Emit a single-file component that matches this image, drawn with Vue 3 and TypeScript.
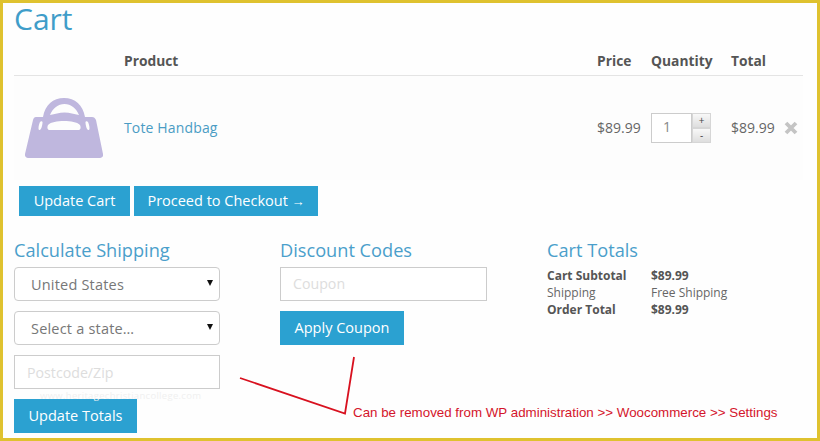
<script setup lang="ts">
interface Row { label: string; value: string; strong: boolean }
const totals: Row[] = [
  { label: 'Cart Subtotal', value: '$89.99', strong: true },
  { label: 'Shipping', value: 'Free Shipping', strong: false },
  { label: 'Order Total', value: '$89.99', strong: true },
]
</script>

<template>
  <div class="frame">
    <h1 class="title">Cart</h1>

    <div class="table">
      <div class="grid head">
        <span></span>
        <span>Product</span>
        <span>Price</span>
        <span>Quantity</span>
        <span>Total</span>
      </div>
      <div class="grid item">
        <svg class="bag" viewBox="25 96 78 60" width="78" height="60" aria-hidden="true">
          <path
            fill="#bfb7de"
            fill-rule="evenodd"
            d="M36 115 H43 C45 103 53 96 64 96 C75 96 83 103 85 115 H92 C94 115 95 116 96 118 L103 152 C103.600 154 102 156 100 156 H28 C26 156 24.500 154 25 152 L33 118 C33.500 116 34.500 115 36 115 Z
               M50 113 C53 106 58 102 64.500 102 C71 102 76 106 79 113 C74 112 70 110.500 64.500 110.500 C59 110.500 55 112 50 113 Z
               M50 128 H78 C81 128 81 125 80 123 C77 120 71 119 64 119 C57 119 51 120 48 123 C47 125 47 128 50 128 Z
               M39.500 128 C41 128 42 125 42.500 121 C42.800 119 41 118.500 40 120 C39 122 37.500 128 39.500 128 Z
               M88.500 128 C87 128 86 125 85.500 121 C85.200 119 87 118.500 88 120 C89 122 90.500 128 88.500 128 Z"
          />
        </svg>
        <a class="link cell">Tote Handbag</a>
        <span class="cell">$89.99</span>
        <div class="qty">
          <span class="qty-value">1</span>
          <div class="steppers">
            <span class="step">+</span>
            <span class="step">-</span>
          </div>
        </div>
        <div class="line-total">
          <span class="cell">$89.99</span>
          <svg class="remove" viewBox="0 0 14 14" width="14" height="14" aria-hidden="true">
            <path d="M2 2 L12 12 M12 2 L2 12" stroke="#c4c4c4" stroke-width="3.800" />
          </svg>
        </div>
      </div>
    </div>

    <div class="actions">
      <button class="btn cart-btn">Update Cart</button>
      <button class="btn checkout-btn">Proceed to Checkout <span class="btn-arrow">→</span></button>
    </div>

    <div class="columns">
      <section class="col">
        <h2>Calculate Shipping</h2>
        <div class="select">United States<i class="caret"></i></div>
        <div class="select">Select a state…<i class="caret"></i></div>
        <input class="field" placeholder="Postcode/Zip" />
        <button class="btn totals-btn">Update Totals</button>
      </section>
      <section class="col">
        <h2>Discount Codes</h2>
        <input class="field coupon" placeholder="Coupon" />
        <button class="btn coupon-btn">Apply Coupon</button>
      </section>
      <section class="col">
        <h2>Cart Totals</h2>
        <dl class="totals">
          <template v-for="row in totals" :key="row.label">
            <dt :class="{ strong: row.strong }">{{ row.label }}</dt>
            <dd :class="{ strong: row.strong }">{{ row.value }}</dd>
          </template>
        </dl>
      </section>
    </div>

    <span class="watermark">www.heritagechristiancollege.com</span>
    <svg class="arrow" width="820" height="441" aria-hidden="true">
      <path d="M240 378 L345 413.500 L354 357" fill="none" stroke="#d8111f" stroke-width="1.800" />
    </svg>
    <span class="note">Can be removed from WP administration &gt;&gt; Woocommerce &gt;&gt; Settings</span>
  </div>
</template>

<style>
html, body { margin: 0; background: #fff; }
</style>

<style scoped>
.frame {
  position: relative;
  box-sizing: border-box;
  width: 820px;
  height: 441px;
  padding: 0 15px 0 11px;
  border: 3px solid #dfc22f;
  background: #fefefe;
  font-family: "Open Sans", sans-serif;
  font-size: 14px;
  color: #666;
}
.title {
  margin: 0;
  height: 42px;
  font-size: 30px;
  line-height: 32px;
  font-weight: 400;
  color: #3f9dc9;
}
.table { width: 789px; }
.grid {
  display: grid;
  grid-template-columns: 110px 473px 54px 80px 71px;
  align-items: center;
}
.head {
  height: 30px;
  border-bottom: 1px solid #e4e4e4;
  font-weight: 700;
  font-size: 13.800px;
  color: #555;
}
.item { height: 104px; background: #fdfdfd; }
.cell { margin-bottom: 2px; }
.bag { margin-left: 11px; }
.link { color: #4a9cc4; letter-spacing: 0.15px; }
.qty { display: flex; align-items: stretch; height: 30px; width: 60px; }
.qty-value {
  box-sizing: border-box;
  width: 41px;
  border: 1px solid #ccc;
  background: #fff;
  padding-left: 11px;
  line-height: 26px;
  color: #888;
}
.steppers { display: flex; flex-direction: column; width: 19px; }
.step {
  flex: 1;
  box-sizing: border-box;
  border: 1px solid #d6d6d6;
  background: linear-gradient(#f8f8f8, #dedede);
  text-align: center;
  font-size: 10px;
  line-height: 12px;
  color: #444;
}
.line-total { display: flex; align-items: center; gap: 9px; }
.remove { flex: none; }
.actions { display: flex; gap: 4px; margin: 6px 0 0 5px; }
.btn {
  display: block;
  border: 0;
  padding: 0 0 1px;
  background: #2ba1d1;
  color: #fff;
  font-family: inherit;
  font-size: 14.500px;
}
.btn-arrow { font-size: 13px; }
.cart-btn { width: 111px; height: 30px; }
.checkout-btn { width: 184px; height: 30px; }
.columns { display: flex; margin-top: 23px; }
.col { display: flex; flex-direction: column; align-items: flex-start; }
.col:nth-child(1) { width: 266px; }
.col:nth-child(2) { width: 267px; }
.col h2 {
  margin: 0 0 4px;
  height: 24px;
  font-size: 18.200px;
  line-height: 23px;
  font-weight: 400;
  color: #4a9fcb;
}
.select, .field {
  box-sizing: border-box;
  height: 34px;
  margin: 0 0 10px;
  border: 1px solid #ccc;
  background: #fff;
  font-family: inherit;
  font-size: 14.500px;
}
.select {
  position: relative;
  width: 206px;
  padding-left: 16px;
  border-radius: 4px;
  line-height: 34px;
  color: #777;
  letter-spacing: 0.2px;
}
.caret {
  position: absolute;
  right: 6px;
  top: 12px;
  border: 3.500px solid transparent;
  border-top: 6px solid #111;
  border-bottom: 0;
}
.field { width: 207px; padding: 0 12px; outline: none; font-size: 14.200px; }
.col:nth-child(1) .field { width: 206px; }
.coupon { padding-bottom: 2px; }
.field::placeholder { color: #ddd; opacity: 1; }
.totals-btn { width: 123px; height: 34px; }
.coupon-btn { width: 124px; height: 34px; }
.totals {
  display: grid;
  grid-template-columns: 104px auto;
  margin: 0;
  font-size: 12px;
  line-height: 17px;
}
.totals dt, .totals dd { margin: 0; }
.strong { font-weight: 700; color: #555; }
.watermark {
  position: absolute;
  left: 37px;
  top: 386px;
  font-size: 9.500px;
  letter-spacing: 0.3px;
  color: #f0f0f0;
}
.arrow { position: absolute; left: -3px; top: -3px; pointer-events: none; }
.note {
  position: absolute;
  left: 350px;
  top: 403px;
  font-family: "Liberation Sans", Arial, sans-serif;
  font-size: 13.350px;
  line-height: 14px;
  color: #d4152b;
  white-space: nowrap;
}
</style>
